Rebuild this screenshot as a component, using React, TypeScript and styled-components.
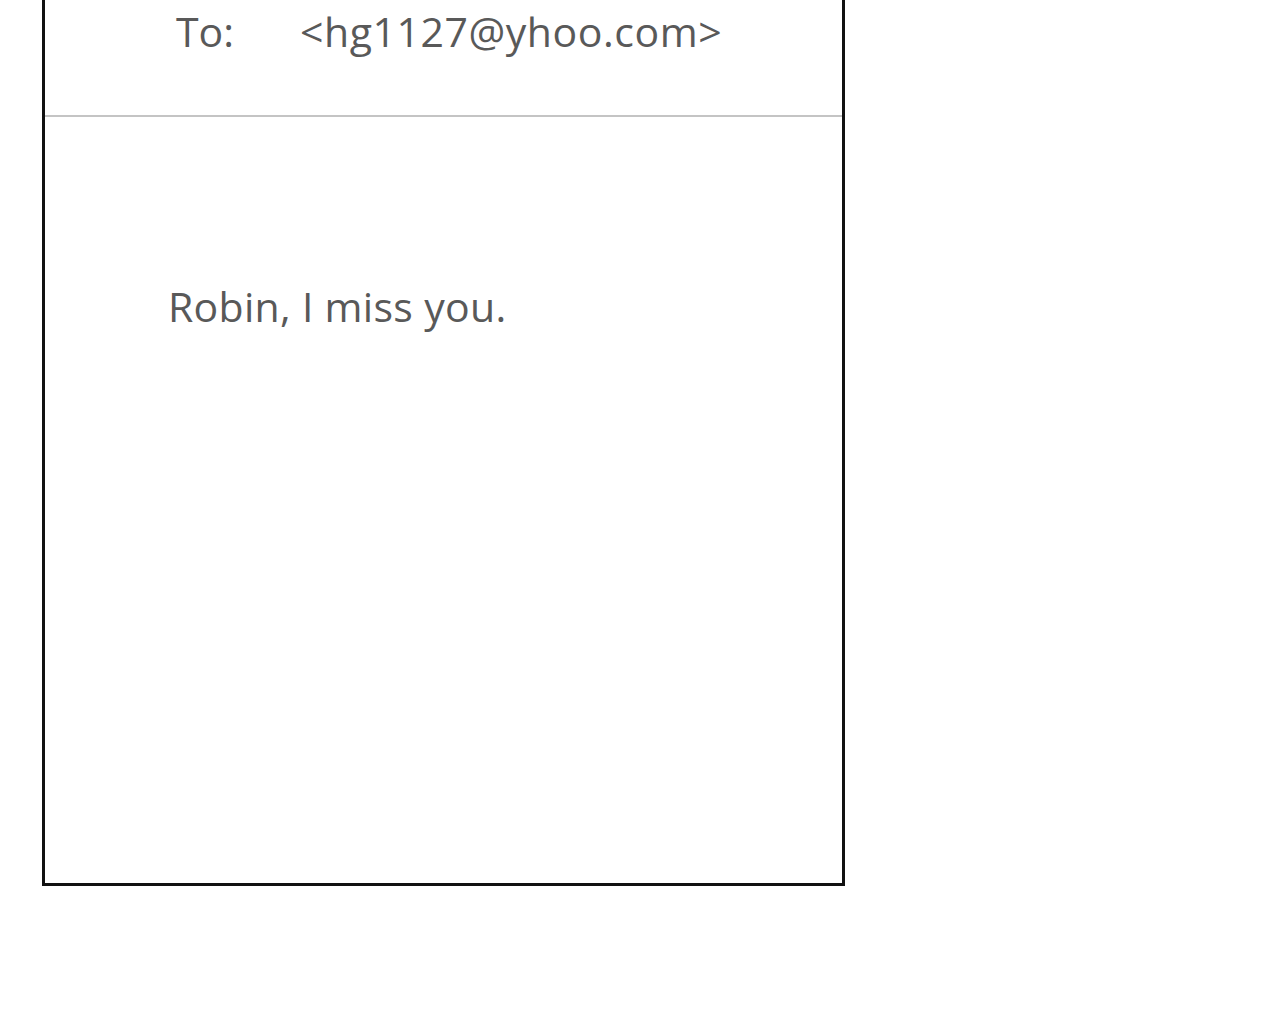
import React from "react";
import styled, { createGlobalStyle } from "styled-components";

const Global = createGlobalStyle`
  html, body { margin: 0; padding: 0; background: #ffffff; }
  body { font-family: "Open Sans", "Noto Sans", sans-serif; }
`;

const Page = styled.div`
  width: 1280px;
  height: 1026px;
  background: #ffffff;
  overflow: hidden;
`;

const Card = styled.div`
  margin-left: 42px;
  width: 797px;
  height: 883px;
  border: 3px solid #111111;
  border-top: none;
  display: flex;
  flex-direction: column;
`;

const Header = styled.div`
  height: 117px;
  border-bottom: 2px solid #c4c4c4;
  display: flex;
  align-items: flex-start;
  padding-left: 131px;
  box-sizing: border-box;
`;

const Label = styled.span`
  font-size: 41px;
  line-height: 62px;
  color: #595959;
  width: 124px;
`;

const Address = styled.span`
  font-size: 41px;
  line-height: 62px;
  color: #595959;
  letter-spacing: 0.55px;
`;

const Body = styled.div`
  padding: 158px 0 0 123px;
  font-size: 41px;
  line-height: 62px;
  color: #595959;
  letter-spacing: 0.3px;
`;

export default function App() {
  return (
    <Page>
      <Global />
      <Card>
        <Header>
          <Label>To:</Label>
          <Address>&lt;hg1127@yhoo.com&gt;</Address>
        </Header>
        <Body>Robin, I miss you.</Body>
      </Card>
    </Page>
  );
}
